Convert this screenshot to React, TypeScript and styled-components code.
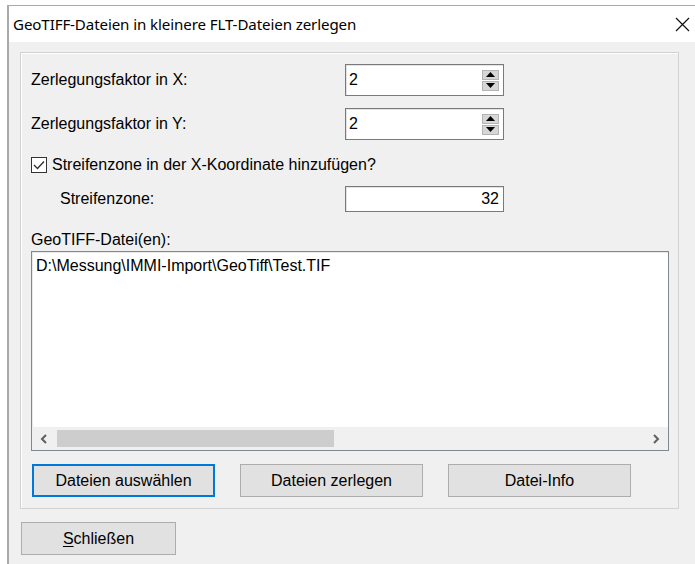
import { createGlobalStyle, styled } from "styled-components";

const GlobalStyle = createGlobalStyle`
  html, body {
    margin: 0;
    padding: 0;
    background: #ffffff;
  }
  body {
    font-family: "Liberation Sans", Arial, sans-serif;
    font-size: 16px;
    color: #000;
  }
`;

const Window = styled.div`
  margin: 5px 0 0 7px;
  width: 688px;
  height: 559px;
  border-top: 1px solid #a9a9a9;
  border-left: 2px solid #a9a9a9;
  box-sizing: border-box;
  background: #f0f0f0;
  display: flex;
  flex-direction: column;
  overflow: hidden;
`;

const TitleBar = styled.div`
  height: 36px;
  flex: none;
  background: #ffffff;
  display: flex;
  align-items: center;
  justify-content: space-between;
  padding: 0 5px 0 4px;
`;

const Title = styled.span`
  font-family: "Noto Sans", "Open Sans", sans-serif;
  font-size: 15.1px;
  color: #000;
  letter-spacing: -0.1px;
`;

const CloseButton = styled.div`
  width: 15px;
  height: 15px;
  display: flex;
  margin-right: 0;
`;

const Body = styled.div`
  padding: 10px 0 0 11px;
  display: flex;
  flex-direction: column;
`;

const GroupBox = styled.div`
  width: 659px;
  box-sizing: border-box;
  border: 1px solid #d2d2d2;
  box-shadow: inset 1px 1px 0 #ffffff;
  padding: 11px 0 11px 10px;
  display: flex;
  flex-direction: column;
`;

const FieldRow = styled.div<{ $top?: number; $h: number }>`
  display: flex;
  align-items: center;
  height: ${(p) => p.$h}px;
  margin-top: ${(p) => p.$top ?? 0}px;
`;

const Label = styled.span<{ $indent?: number }>`
  width: ${(p) => 314 - (p.$indent ?? 0)}px;
  padding-left: ${(p) => p.$indent ?? 0}px;
  flex: none;
`;

const Edit = styled.div<{ $h: number; $align?: string }>`
  width: 159px;
  height: ${(p) => p.$h}px;
  box-sizing: border-box;
  background: #ffffff;
  border: 1px solid #7a7a7a;
  box-shadow: inset 1px 1px 0 #e3e3e3;
  display: flex;
  align-items: center;
  justify-content: ${(p) => p.$align ?? "space-between"};
  padding: 0 4px 0 3px;
`;

const SpinButtons = styled.div`
  display: flex;
  flex-direction: column;
  gap: 1px;
`;

const SpinButton = styled.div`
  width: 17px;
  height: 10px;
  box-sizing: border-box;
  background: #d6d6d6;
  border: 1px solid #b4b4b4;
  display: flex;
  align-items: center;
  justify-content: center;
`;

const CheckRow = styled.label`
  display: flex;
  align-items: center;
  gap: 5px;
  height: 20px;
  margin-top: 15px;
`;

const CheckBox = styled.span`
  width: 16px;
  height: 16px;
  box-sizing: border-box;
  border: 1px solid #333333;
  background: #ffffff;
  display: flex;
  align-items: center;
  justify-content: center;
`;

const SectionLabel = styled.div`
  height: 20px;
  line-height: 20px;
  margin-top: 18px;
`;

const ListBox = styled.div`
  width: 638px;
  height: 200px;
  margin-top: 1px;
  box-sizing: border-box;
  background: #ffffff;
  border: 1px solid #828790;
  box-shadow: inset 1px 1px 0 #e8e8e8;
  display: flex;
  flex-direction: column;
`;

const ListItems = styled.div`
  flex: 1;
  padding: 4px 0 0 4px;
  line-height: 19px;
`;

const HScroll = styled.div`
  height: 23px;
  flex: none;
  background: #f0f0f0;
  display: flex;
  align-items: center;
`;

const ScrollArrow = styled.div`
  width: 24px;
  height: 23px;
  flex: none;
  display: flex;
  align-items: center;
  justify-content: center;
`;

const ScrollTrack = styled.div`
  flex: 1;
  height: 17px;
  display: flex;
  padding-left: 1px;
`;

const ScrollThumb = styled.div`
  width: 277px;
  height: 100%;
  background: #cdcdcd;
`;

const ButtonRow = styled.div`
  display: flex;
  gap: 25px;
  margin-top: 13px;
  margin-left: 1px;
`;

const Button = styled.button<{ $focused?: boolean; $w?: number }>`
  width: ${(p) => p.$w ?? 183}px;
  height: 33px;
  box-sizing: border-box;
  background: #e1e1e1;
  border: ${(p) => (p.$focused ? "2px solid #0078d7" : "1px solid #adadad")};
  font-family: "Liberation Sans", Arial, sans-serif;
  font-size: 16px;
  color: #000;
  padding: 0;
  cursor: default;
`;

const Footer = styled.div`
  margin-top: 13px;
  padding-left: 1px;
`;

const Mnemonic = styled.span`
  text-decoration: underline;
  text-underline-offset: 2px;
`;

function ArrowUp() {
  return (
    <svg width="9" height="5" viewBox="0 0 9 5">
      <path d="M0 5 L4.5 0 L9 5 Z" fill="#000" />
    </svg>
  );
}

function ArrowDown() {
  return (
    <svg width="9" height="5" viewBox="0 0 9 5">
      <path d="M0 0 L9 0 L4.5 5 Z" fill="#000" />
    </svg>
  );
}

function SpinEdit({ value }: { value: string }) {
  return (
    <Edit $h={32}>
      <span>{value}</span>
      <SpinButtons>
        <SpinButton>
          <ArrowUp />
        </SpinButton>
        <SpinButton>
          <ArrowDown />
        </SpinButton>
      </SpinButtons>
    </Edit>
  );
}

function Chevron({ dir }: { dir: "left" | "right" }) {
  const d = dir === "left" ? "M6 1 L2 5 L6 9" : "M2 1 L6 5 L2 9";
  return (
    <svg width="8" height="10" viewBox="0 0 8 10">
      <path d={d} stroke="#606060" strokeWidth="2" fill="none" />
    </svg>
  );
}

export default function App() {
  return (
    <>
      <GlobalStyle />
      <Window>
        <TitleBar>
          <Title>GeoTIFF-Dateien in kleinere FLT-Dateien zerlegen</Title>
          <CloseButton>
            <svg width="15" height="15" viewBox="0 0 15 15">
              <path d="M1 1 L14 14 M14 1 L1 14" stroke="#111" strokeWidth="1.2" />
            </svg>
          </CloseButton>
        </TitleBar>
        <Body>
          <GroupBox>
            <FieldRow $h={32}>
              <Label>Zerlegungsfaktor in X:</Label>
              <SpinEdit value="2" />
            </FieldRow>
            <FieldRow $h={32} $top={12}>
              <Label>Zerlegungsfaktor in Y:</Label>
              <SpinEdit value="2" />
            </FieldRow>
            <CheckRow>
              <CheckBox>
                <svg width="12" height="10" viewBox="0 0 12 10">
                  <path d="M1 5 L4.5 8.5 L11 1.5" stroke="#333" strokeWidth="1.4" fill="none" />
                </svg>
              </CheckBox>
              Streifenzone in der X-Koordinate hinzufügen?
            </CheckRow>
            <FieldRow $h={26} $top={11}>
              <Label $indent={29}>Streifenzone:</Label>
              <Edit $h={26} $align="flex-end">
                <span>32</span>
              </Edit>
            </FieldRow>
            <SectionLabel>GeoTIFF-Datei(en):</SectionLabel>
            <ListBox>
              <ListItems>D:\Messung\IMMI-Import\GeoTiff\Test.TIF</ListItems>
              <HScroll>
                <ScrollArrow>
                  <Chevron dir="left" />
                </ScrollArrow>
                <ScrollTrack>
                  <ScrollThumb />
                </ScrollTrack>
                <ScrollArrow>
                  <Chevron dir="right" />
                </ScrollArrow>
              </HScroll>
            </ListBox>
            <ButtonRow>
              <Button $focused>Dateien auswählen</Button>
              <Button>Dateien zerlegen</Button>
              <Button>Datei-Info</Button>
            </ButtonRow>
          </GroupBox>
          <Footer>
            <Button $w={155}>
              <Mnemonic>S</Mnemonic>chließen
            </Button>
          </Footer>
        </Body>
      </Window>
    </>
  );
}
